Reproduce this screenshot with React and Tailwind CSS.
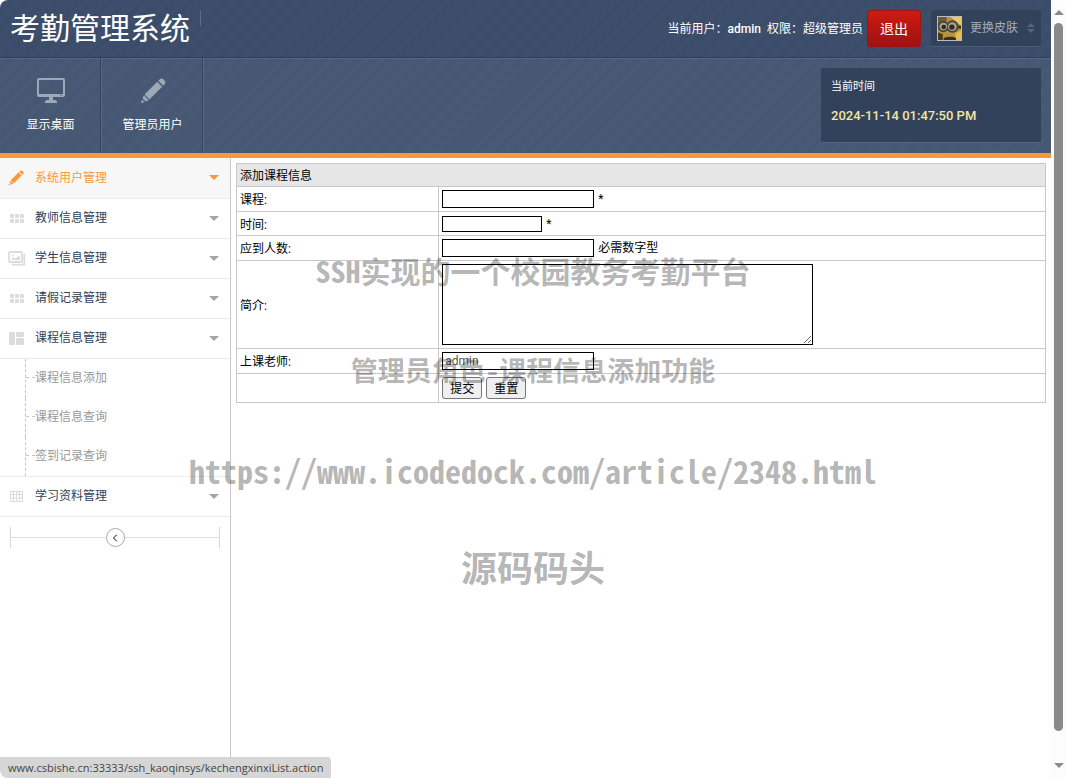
import React from 'react';
import { ChevronLeft } from 'lucide-react';

const topNav = [
  { label: '显示桌面', icon: MonitorIcon },
  { label: '管理员用户', icon: PencilIcon },
];

const menu = [
  { label: '系统用户管理', icon: PencilIcon, active: true },
  { label: '教师信息管理', icon: DotsIcon },
  { label: '学生信息管理', icon: PhotosIcon },
  { label: '请假记录管理', icon: DotsIcon },
  {
    label: '课程信息管理',
    icon: BlocksIcon,
    children: ['课程信息添加', '课程信息查询', '签到记录查询'],
  },
  { label: '学习资料管理', icon: GridIcon },
];

function MonitorIcon({ className }) {
  return (
    <svg viewBox="0 0 28 26" className={className} fill="currentColor" aria-hidden="true">
      <path
        fillRule="evenodd"
        d="M2 0h24a2 2 0 0 1 2 2v15a2 2 0 0 1-2 2H16v3h2q2 0 2 2v1H8v-1q0-2 2-2h2v-3H2a2 2 0 0 1-2-2V2a2 2 0 0 1 2-2zM2 2v14h24V2zM23 16.7h2v.8h-2z"
      />
    </svg>
  );
}

function PencilIcon({ className }) {
  return (
    <svg viewBox="0 0 26 26" className={className} fill="currentColor" aria-hidden="true">
      <path d="M19.500 1.500q2-2 4.500.5t.5 4.500l-1.200 1.200-5-5zM17.200 3.800l5 5L9.500 21.500l-5-5zM3.800 17.300l4.900 4.900-3 1.200-3.100-3.100zM2 21.500l2.500 2.500L1 25.300z" />
    </svg>
  );
}

function DotsIcon({ className }) {
  return (
    <svg viewBox="0 0 18 18" className={className} fill="currentColor" aria-hidden="true">
      {[2, 7, 12].map((x) => (
        <React.Fragment key={x}>
          <rect x={x} y="5" width="4" height="4" rx="0.700" />
          <rect x={x} y="10" width="4" height="4" rx="0.700" />
        </React.Fragment>
      ))}
    </svg>
  );
}

function PhotosIcon({ className }) {
  return (
    <svg viewBox="0 0 18 18" className={className} fill="none" stroke="currentColor" aria-hidden="true">
      <rect x="1" y="3" width="13" height="10" rx="1" strokeWidth="1.800" />
      <path d="M16.300 5v10.700H4" strokeWidth="1.800" />
      <path d="M3.500 11V9.500l2-1 2 1L11 7l1 1v3z" fill="currentColor" stroke="none" />
      <circle cx="5" cy="6.500" r="0.900" fill="currentColor" stroke="none" />
    </svg>
  );
}

function BlocksIcon({ className }) {
  return (
    <svg viewBox="0 0 18 18" className={className} fill="currentColor" aria-hidden="true">
      <rect x="1" y="3" width="6" height="13" rx="1" />
      <rect x="8" y="3" width="8" height="5" rx="1" />
      <rect x="8" y="9" width="8" height="7" rx="1" />
    </svg>
  );
}

function GridIcon({ className }) {
  return (
    <svg viewBox="0 0 18 18" className={className} fill="none" stroke="currentColor" aria-hidden="true">
      <path d="M2.500 4.500h12v10h-12zM2.500 7.500h12M2.500 11h12M5.500 4.500v10M8.500 4.500v10M11.500 4.500v10" />
    </svg>
  );
}

function Caret({ className }) {
  return (
    <svg viewBox="0 0 10 5" className={className} fill="currentColor" aria-hidden="true">
      <path d="M0 0h10L5 5z" />
    </svg>
  );
}

function SkinThumb() {
  return (
    <svg viewBox="0 0 24 24" className="size-[25px] border border-[#b9bdc4]" aria-hidden="true">
      <rect width="24" height="24" fill="#b8933a" />
      <path d="M0 0h9v9H0z" fill="#6d5b33" />
      <path d="M13 0h11v9z" fill="#ecc95c" />
      <path d="M0 9h24v3H0z" fill="#3a3320" />
      <circle cx="5.500" cy="10" r="5.800" fill="#45463f" />
      <circle cx="15" cy="10" r="6.500" fill="#45463f" />
      <circle cx="5.500" cy="10" r="4" fill="#a5a28f" />
      <circle cx="15" cy="10" r="4.600" fill="#a5a28f" />
      <circle cx="6" cy="10.500" r="2.400" fill="#33281a" />
      <circle cx="14.500" cy="10.500" r="2.700" fill="#33281a" />
      <path d="M0 16l5 2v6H0z" fill="#4a3a1c" />
      <path d="M6 22q7-3 13 0v2H6z" fill="#3a2d18" />
      <path d="M18 17l6-3v10h-5z" fill="#e5bd4c" />
    </svg>
  );
}

function Header() {
  return (
    <header className="flex h-[58px] justify-between rounded-tl-lg border-b border-[#2f405b] bg-[#384a67] bg-[repeating-linear-gradient(135deg,#ffffff0a_0_1px,transparent_1px_2px)] px-[10px] pt-[10px] text-white">
      <div className="flex items-start">
        <h1 className="text-[30px] leading-[38px]">考勤管理系统</h1>
        <span className="ml-[10px] h-4 w-px bg-[#5b6b85]" />
      </div>
      <div className="flex items-start">
        <p className="mr-1 text-xs leading-[38px]">
          当前用户：<span className="font-medium">admin</span>&nbsp; 权限：超级管理员
        </p>
        <button
          type="button"
          className="mr-[10px] h-[37px] w-[54px] rounded-[3px] border border-[#9c1512] bg-linear-to-b from-[#cf1a10] to-[#a01210] text-sm"
        >
          退出
        </button>
        <button
          type="button"
          className="flex h-[37px] w-[110px] items-center rounded-xs border-b border-[#485c7b] bg-[#32425a] pl-[6px] text-xs text-[#a3adbb]"
        >
          <SkinThumb />
          <span className="ml-2">更换皮肤</span>
          <svg viewBox="0 0 8 10" className="ml-[9px] h-[10px] w-2" fill="#56657f" aria-hidden="true">
            <path d="M0 4l4-4 4 4zM0 6l4 4 4-4z" />
          </svg>
        </button>
      </div>
    </header>
  );
}

function TopNav() {
  return (
    <nav className="flex h-[100px] justify-between border-b-[5px] border-[#f9983a] bg-[#435571] bg-[repeating-linear-gradient(135deg,#ffffff0a_0_1px,transparent_1px_2px)] text-xs text-white shadow-[inset_0_1px_0_#52678a]">
      <div className="flex">
        {topNav.map(({ label, icon: Icon }) => (
          <a
            key={label}
            href="#"
            className="flex w-[102px] flex-col items-center border-r border-[#566a88] pt-5 shadow-[inset_-1px_0_0_#33445f]"
          >
            <Icon className="h-[26px] w-7 text-[#9da8b8]" />
            <span className="mt-[13px] leading-4">{label}</span>
          </a>
        ))}
      </div>
      <div className="mt-[10px] mr-[10px] h-[75px] w-[220px] rounded-xs border-b border-[#52668a] bg-[#32425a] px-[10px] pt-[10px]">
        <p className="text-[11px] leading-[18px]">当前时间</p>
        <p className="mt-[10px] text-[13px] leading-[20px] font-medium text-[#f2e6a5]">2024-11-14 01:47:50 PM</p>
      </div>
    </nav>
  );
}

function Sidebar() {
  return (
    <aside className="w-[231px] shrink-0 border-r border-[#c8c8c8] text-xs">
      <ul>
        {menu.map(({ label, icon: Icon, active, children }) => (
          <li key={label}>
            <a
              href="#"
              className={`flex items-center border-b border-[#ebebeb] pr-[11px] pb-px pl-2 ${
                active ? 'h-[41px] bg-[#f7f7f7] text-[#f9983a]' : 'h-10 text-[#2f3f58]'
              }`}
            >
              <Icon className={active ? 'size-4' : 'size-[18px] text-[#dcdcdc]'} />
              <span className={`flex-1 ${active ? 'ml-[11px]' : 'ml-[9px]'}`}>{label}</span>
              <Caret className={`h-[5px] w-[10px] ${active ? '' : 'text-[#a5a5a5]'}`} />
            </a>
            {children && (
              <ul className="border-b border-[#ebebeb] pl-[25px]">
                {children.map((child) => (
                  <li
                    key={child}
                    className="flex h-[39px] items-center border-l border-dashed border-[#c6c6c6] pb-[2px]"
                  >
                    <span className="w-[9px] border-t border-dashed border-[#c6c6c6]" />
                    <a href="#" className="text-[#999]">
                      {child}
                    </a>
                  </li>
                ))}
              </ul>
            )}
          </li>
        ))}
      </ul>
      <div className="mx-[10px] mt-[10px] flex h-[21px] items-center border-x border-[#d8d8d8]">
        <span className="h-px flex-1 bg-[#dedede]" />
        <button
          type="button"
          aria-label="收起"
          className="flex size-[19px] items-center justify-center rounded-full border border-[#aaa]"
        >
          <ChevronLeft className="size-3 text-black" />
        </button>
        <span className="h-px flex-1 bg-[#dedede]" />
      </div>
    </aside>
  );
}

function Row({ id, label, height, children }) {
  return (
    <tr className={height}>
      <td className="border border-[#c8c8c8] px-[3px] pt-[2px]">
        {label && <label htmlFor={id}>{label}</label>}
      </td>
      <td className="border border-[#c8c8c8] px-[3px]">
        <div className="flex items-center gap-1">{children}</div>
      </td>
    </tr>
  );
}

function CourseForm() {
  return (
    <form className="min-w-0 flex-1 p-[5px]" onSubmit={(e) => e.preventDefault()}>
      <table className="w-full table-fixed border-collapse text-xs text-black">
        <colgroup>
          <col className="w-1/4" />
          <col />
        </colgroup>
        <thead>
          <tr className="h-[23px]">
            <th colSpan={2} className="border border-[#c8c8c8] bg-[#e6e6e6] px-[3px] pt-[2px] text-left font-normal">
              添加课程信息
            </th>
          </tr>
        </thead>
        <tbody>
          <Row id="course" label="课程:" height="h-[25px]">
            <input id="course" className="h-[18px] w-[152px] border border-black px-[2px]" />
            <span>*</span>
          </Row>
          <Row id="time" label="时间:" height="h-6">
            <input id="time" className="h-4 w-[100px] border border-black px-[2px]" />
            <span>*</span>
          </Row>
          <Row id="count" label="应到人数:" height="h-[25px]">
            <input id="count" className="h-[18px] w-[152px] border border-black px-[2px]" />
            <span>必需数字型</span>
          </Row>
          <Row id="intro" label="简介:" height="h-[88px]">
            <textarea id="intro" className="h-[81px] w-[371px] border border-black" />
          </Row>
          <Row id="teacher" label="上课老师:" height="h-[25px]">
            <input
              id="teacher"
              defaultValue="admin"
              className="h-[18px] w-[152px] border border-black px-[2px] text-[#555]"
            />
          </Row>
          <Row height="h-[29px]">
            <button type="submit" className="h-[22px] w-10 rounded-[3px] border border-[#767676] bg-[#efefef] pt-px">
              提交
            </button>
            <button type="reset" className="h-[22px] w-10 rounded-[3px] border border-[#767676] bg-[#efefef] pt-px">
              重置
            </button>
          </Row>
        </tbody>
      </table>
    </form>
  );
}

function Scrollbar() {
  return (
    <div className="flex w-[15px] shrink-0 flex-col items-center rounded-r-lg bg-[#fcfcfc] pt-[10px] pb-[10px] text-[#8a8a8a]">
      <Caret className="h-[5px] w-[10px] rotate-180" />
      <div className="mt-2 mb-8 w-[9px] flex-1 rounded-full bg-[#8a8a8a]" />
      <Caret className="h-[5px] w-[10px]" />
    </div>
  );
}

function Watermark() {
  return (
    <div className="pointer-events-none absolute inset-x-0 top-[250px] flex flex-col items-center gap-[60px] font-['Noto_Sans_Mono_CJK_SC','Liberation_Mono','Noto_Sans_CJK_SC',monospace] font-bold whitespace-nowrap text-black/30">
      <p className="flex h-10 items-center text-[30px] leading-10">SSH实现的一个校园教务考勤平台</p>
      <p className="flex h-10 items-center text-[27px] leading-10">管理员角色-课程信息添加功能</p>
      <p className="flex h-10 items-center text-[32px] leading-10">https://www.icodedock.com/article/2348.html</p>
      <p className="-mt-1 flex h-10 items-center text-[36px] leading-10">源码码头</p>
    </div>
  );
}

function App() {
  return (
    <div className="relative flex min-h-screen bg-white font-[Roboto,'Noto_Sans_CJK_SC',sans-serif]">
      <div className="flex min-w-0 flex-1 flex-col">
        <Header />
        <TopNav />
        <main className="flex flex-1">
          <Sidebar />
          <CourseForm />
        </main>
      </div>
      <Scrollbar />
      <Watermark />
      <div className="absolute bottom-0 left-0 rounded-tr-[4px] rounded-bl-lg bg-[#d6d6d6] px-2 py-[2px] font-['Open_Sans',sans-serif] text-[11px] leading-[17px] text-[#444]">
        www.csbishe.cn:33333/ssh_kaoqinsys/kechengxinxiList.action
      </div>
    </div>
  );
}

export default App;
